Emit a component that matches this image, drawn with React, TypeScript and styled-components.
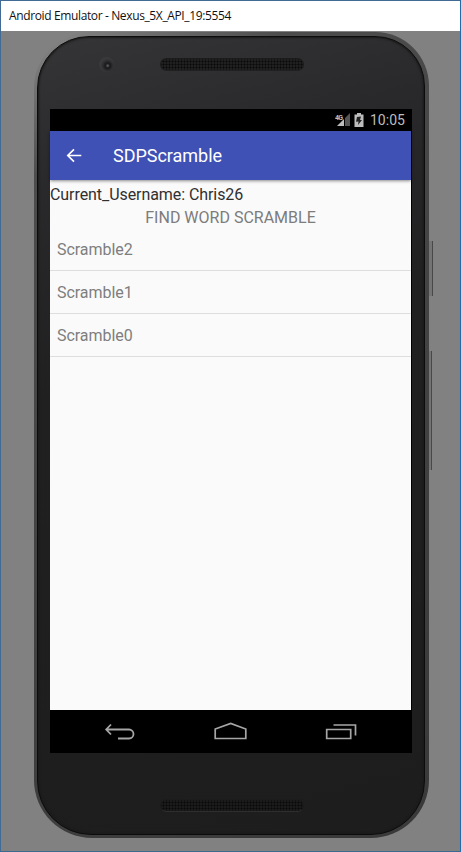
import React from "react";
import styled, { createGlobalStyle } from "styled-components";

const GlobalStyle = createGlobalStyle`
  *, *::before, *::after { box-sizing: border-box; }
  body { margin: 0; overflow: hidden; }
`;

const Window = styled.div`
  display: flex;
  flex-direction: column;
  width: 461px;
  height: 852px;
  border: 1px solid #416a94;
  border-right-color: #1c6cae;
  border-bottom-color: #3e698f;
  background: #818181;
`;

const TitleBar = styled.header`
  height: 30px;
  flex: none;
  padding-left: 8px;
  background: #fff;
  color: #111;
  font: 12px/30px "Open Sans", sans-serif;
  letter-spacing: -0.37px;
  white-space: nowrap;
`;

const Desk = styled.main`
  display: flex;
  align-items: flex-start;
  padding: 1px 0 0 33px;
`;

const Phone = styled.div`
  width: 395px;
  height: 806px;
  flex: none;
  padding: 4px 4px 3px 3px;
  border-radius: 56px 54px 58px 58px;
  background: linear-gradient(150deg, #8a8a8a 0, #707070 6%, #4c4c4c 14%, #434343 50%, #393939 100%);
`;

const Face = styled.div`
  display: flex;
  flex-direction: column;
  width: 388px;
  height: 799px;
  padding: 0 12px;
  border: 1px solid #0c0c0c;
  border-radius: 52px 50px 54px 54px;
  box-shadow: inset 0 0 2px 1px #1a1a1a;
  background: linear-gradient(165deg, #353537 0, #29292b 17%, #202021 40%, #1d1d1e 100%);
`;

const TopBezel = styled.div`
  display: flex;
  align-items: flex-start;
  height: 72px;
  flex: none;
`;

const Camera = styled.div`
  width: 15px;
  height: 15px;
  margin: 20px 0 0 49px;
  border-radius: 50%;
  background: radial-gradient(circle at 58% 58%, #555 0 0.6px, #1d1d20 2px 3px, #2e2e31 5px, #39393b 7px);
`;

const Speaker = styled.div<{ $bottom?: boolean }>`
  width: 144px;
  height: 13px;
  flex: none;
  margin: ${p => (p.$bottom ? "46px 0 0 110px" : "21px 0 0 46px")};
  border: 1px solid #1c1c1c;
  border-bottom-color: ${p => (p.$bottom ? "#2e2e2e" : "#202020")};
  border-radius: 7px;
  background: radial-gradient(circle, #0a0a0a 0.8px, transparent 1.2px) 1px 1px / 3px 3px,
    ${p => (p.$bottom ? "#1b1b1b" : "#202020")};
`;

const Screen = styled.div`
  display: flex;
  flex-direction: column;
  width: 362px;
  height: 644px;
  flex: none;
  padding-right: 1px;
  background: #000;
  font-family: Roboto, sans-serif;
`;

const StatusBar = styled.div`
  display: flex;
  align-items: center;
  justify-content: flex-end;
  height: 22px;
  flex: none;
  padding-right: 6px;
  color: #bdbdbd;
  font-size: 14px;
  line-height: 22px;
`;

const Clock = styled.span`
  margin-left: 4px;
  letter-spacing: 0.05px;
`;

const AppBar = styled.div`
  display: flex;
  align-items: center;
  height: 49px;
  flex: none;
  z-index: 1;
  padding-left: 16px;
  background: #3f51b5;
  box-shadow: 0 1px 3px rgba(0, 0, 0, 0.45);
  color: #fff;
`;

const AppTitle = styled.h1`
  margin: 1px 0 0 30px;
  font-size: 18px;
  font-weight: 400;
  line-height: 24px;
  letter-spacing: -0.03px;
`;

const Content = styled.div`
  flex: 1;
  background: #fafafa;
`;

const Username = styled.div`
  padding-top: 2px;
  color: #303030;
  font-size: 16px;
  line-height: 25px;
  letter-spacing: -0.07px;
  white-space: nowrap;
`;

const SearchButton = styled.button`
  display: block;
  width: 100%;
  height: 22px;
  padding: 0;
  border: 0;
  background: none;
  color: #7c7c7c;
  font: 16px/22px Roboto, sans-serif;
`;

const List = styled.ul`
  margin: 0;
  padding: 0;
  list-style: none;
`;

const Item = styled.li`
  height: 43px;
  padding-left: 7px;
  border-bottom: 1px solid #dedede;
  color: #7e7e7e;
  font-size: 16px;
  line-height: 44px;
  letter-spacing: -0.05px;
  &:first-child { height: 42px; line-height: 41px; }
`;

const NavBar = styled.nav`
  display: flex;
  justify-content: space-between;
  align-items: center;
  height: 43px;
  flex: none;
  padding: 0 54px;
`;

const SideKeys = styled.div`
  display: flex;
  flex-direction: column;
  padding-top: 209px;
`;

const Key = styled.div<{ $height: number; $width: number; $gap?: number }>`
  width: ${p => p.$width}px;
  height: ${p => p.$height}px;
  margin-top: ${p => p.$gap ?? 0}px;
  background: #747474;
  border-right: 1px solid #484848;
`;

export default function App() {
  return (
    <Window>
      <GlobalStyle />
      <TitleBar>Android Emulator - Nexus_5X_API_19:5554</TitleBar>
      <Desk>
        <Phone>
          <Face>
            <TopBezel>
              <Camera />
              <Speaker />
            </TopBezel>
            <Screen>
              <StatusBar>
                <svg width="17" height="16" viewBox="0 0 17 16">
                  <path d="M2 14 9 7v7z" fill="#bdbdbd" />
                  <path d="M10 6 15 1v13h-5z" fill="#555" />
                  <text x="0" y="7.5" fill="#bdbdbd" fontFamily="Roboto" fontSize="7" fontWeight="700" textLength="8">4G</text>
                </svg>
                <svg width="14" height="16" viewBox="0 0 14 16">
                  <path d="M2.5 2.5H5V1h4v1.5h2.5V15h-9z" fill="#bdbdbd" />
                  <path d="m5 5 4-.5L8 8h2l-4 5 .5-3.5-2.5.2z" fill="#222" />
                </svg>
                <Clock>10:05</Clock>
              </StatusBar>
              <AppBar>
                <svg width="17" height="18" viewBox="0 0 17 18" fill="none" stroke="#fff" strokeWidth="1.7">
                  <path d="M15.3 8.5H2M8 2.3 1.8 8.5 8 14.7" />
                </svg>
                <AppTitle>SDPScramble</AppTitle>
              </AppBar>
              <Content>
                <Username>Current_Username: Chris26</Username>
                <SearchButton>FIND WORD SCRAMBLE</SearchButton>
                <List>
                  <Item>Scramble2</Item>
                  <Item>Scramble1</Item>
                  <Item>Scramble0</Item>
                </List>
              </Content>
              <NavBar>
                <svg width="32" height="20" viewBox="0 0 32 20" fill="none" stroke="#a6a6a6" strokeWidth="1.8">
                  <path d="M7 2.5 2.2 7.5 7 12.5M2.5 7.5H25a4.5 4.5 0 0 1 0 9H14" />
                </svg>
                <svg width="34" height="20" viewBox="0 0 34 20" fill="none" stroke="#a6a6a6" strokeWidth="1.7">
                  <path d="M1.2 16.5V7L16.7 1.5 31.8 7v9.5z" />
                </svg>
                <svg width="32" height="20" viewBox="0 0 32 20" fill="none" stroke="#a6a6a6" strokeWidth="1.7">
                  <path d="M1.7 7.5h24v9h-24zM8.5 3h22v10.5" />
                </svg>
              </NavBar>
            </Screen>
            <Speaker $bottom />
          </Face>
        </Phone>
        <SideKeys>
          <Key $width={4} $height={55} />
          <Key $width={3} $height={119} $gap={55} />
        </SideKeys>
      </Desk>
    </Window>
  );
}
